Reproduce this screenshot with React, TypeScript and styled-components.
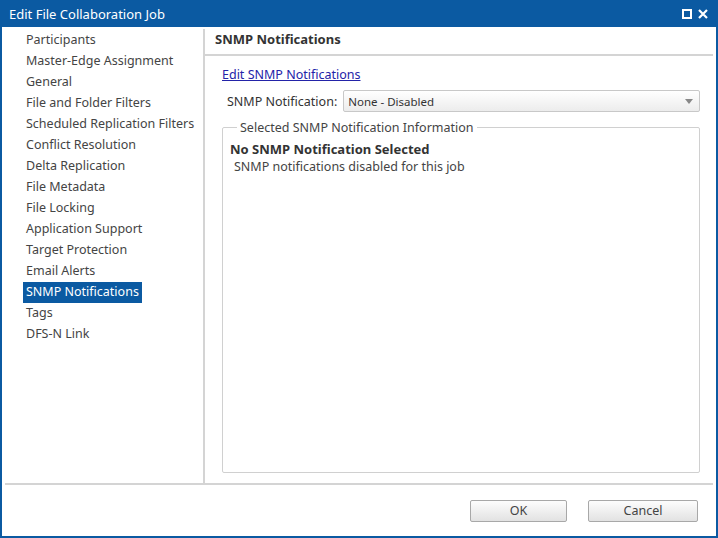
import styled, { createGlobalStyle } from "styled-components";

const Global = createGlobalStyle`
  html, body { margin: 0; padding: 0; background: #fff; }
  body { font-family: "Noto Sans", "DejaVu Sans", sans-serif; font-size: 12.5px; color: #333; }
`;

const Window = styled.div`
  width: 718px;
  height: 538px;
  box-sizing: border-box;
  border: 2px solid #0b5aa2;
  border-top: none;
  display: flex;
  flex-direction: column;
  background: #fff;
`;

const TitleBar = styled.div`
  height: 27px;
  margin: 0 -2px;
  background: #0b5aa2;
  color: #fff;
  display: flex;
  align-items: center;
  justify-content: space-between;
  padding: 0 10px 0 9px;
  font-size: 13px;
`;

const TitleIcons = styled.div`
  display: flex;
  gap: 6px;
  align-items: center;
`;

const Body = styled.div`
  flex: 1;
  display: flex;
  margin: 2px 3px 0 3px;
  border-bottom: 2px solid #d4d4d4;
`;

const Nav = styled.div`
  width: 200px;
  border-right: 2px solid #d4d4d4;
  padding: 1px 0 0 18px;
  box-sizing: border-box;
`;

const NavItem = styled.div<{ $active?: boolean }>`
  height: 21px;
  line-height: 20px;
  padding: 0 3px;
  width: fit-content;
  white-space: nowrap;
  background: ${(p) => (p.$active ? "#0b5aa2" : "transparent")};
  color: ${(p) => (p.$active ? "#fff" : "#444")};
`;

const Content = styled.div`
  flex: 1;
  display: flex;
  flex-direction: column;
`;

const Header = styled.div`
  height: 25px;
  line-height: 20px;
  padding-left: 10px;
  font-weight: bold;
  font-size: 13px;
  color: #333;
  border-bottom: 2px solid #d4d4d4;
`;

const Pane = styled.div`
  flex: 1;
  display: flex;
  flex-direction: column;
  padding: 10px 13px 10px 17px;
`;

const Link = styled.a`
  color: #1a0dab;
  color: #2323a8;
  text-decoration: underline;
  width: fit-content;
  cursor: pointer;
`;

const FieldRow = styled.div`
  display: flex;
  align-items: center;
  margin: 7px 0 0 5px;
  gap: 6px;
`;

const Select = styled.div`
  flex: 1;
  height: 20px;
  border: 1px solid #c8c8c8;
  border-radius: 2px;
  background: linear-gradient(#fff, #ececec);
  display: flex;
  align-items: center;
  justify-content: space-between;
  padding: 0 6px 0 4px;
  font-size: 11.5px;
  color: #333;
`;

const Fieldset = styled.fieldset`
  flex: 1;
  margin: 7px 0 0 0;
  border: 1px solid #d0d0d0;
  border-radius: 2px;
  padding: 4px 7px;
  legend {
    padding: 0 3px;
    margin-left: 7px;
    color: #444;
  }
`;

const InfoTitle = styled.div`
  font-weight: bold;
  font-size: 13px;
  color: #333;
`;

const InfoText = styled.div`
  padding-left: 4px;
  color: #444;
`;

const Footer = styled.div`
  height: 51px;
  display: flex;
  justify-content: flex-end;
  align-items: center;
  gap: 21px;
  padding-right: 18px;
`;

const Button = styled.div<{ $w: number }>`
  width: ${(p) => p.$w}px;
  height: 20px;
  border: 1px solid #a8a8a8;
  border-radius: 2px;
  background: linear-gradient(#fdfdfd, #e2e2e2);
  display: flex;
  align-items: center;
  justify-content: center;
  color: #444;
`;

const items = [
  "Participants",
  "Master-Edge Assignment",
  "General",
  "File and Folder Filters",
  "Scheduled Replication Filters",
  "Conflict Resolution",
  "Delta Replication",
  "File Metadata",
  "File Locking",
  "Application Support",
  "Target Protection",
  "Email Alerts",
  "SNMP Notifications",
  "Tags",
  "DFS-N Link",
];

export default function App() {
  return (
    <>
      <Global />
      <Window>
        <TitleBar>
          <span>Edit File Collaboration Job</span>
          <TitleIcons>
            <svg width="10" height="10" viewBox="0 0 10 10">
              <rect x="1" y="1" width="8" height="8" fill="none" stroke="#fff" strokeWidth="2" />
            </svg>
            <svg width="10" height="10" viewBox="0 0 10 10">
              <path d="M1 1L9 9M9 1L1 9" stroke="#fff" strokeWidth="2.2" />
            </svg>
          </TitleIcons>
        </TitleBar>
        <Body>
          <Nav>
            {items.map((it) => (
              <NavItem key={it} $active={it === "SNMP Notifications"}>
                {it}
              </NavItem>
            ))}
          </Nav>
          <Content>
            <Header>SNMP Notifications</Header>
            <Pane>
              <Link>Edit SNMP Notifications</Link>
              <FieldRow>
                <span>SNMP Notification:</span>
                <Select>
                  <span>None - Disabled</span>
                  <svg width="8" height="5" viewBox="0 0 8 5">
                    <path d="M0 0H8L4 5Z" fill="#888" />
                  </svg>
                </Select>
              </FieldRow>
              <Fieldset>
                <legend>Selected SNMP Notification Information</legend>
                <InfoTitle>No SNMP Notification Selected</InfoTitle>
                <InfoText>SNMP notifications disabled for this job</InfoText>
              </Fieldset>
            </Pane>
          </Content>
        </Body>
        <Footer>
          <Button $w={95}>OK</Button>
          <Button $w={108}>Cancel</Button>
        </Footer>
      </Window>
    </>
  );
}
